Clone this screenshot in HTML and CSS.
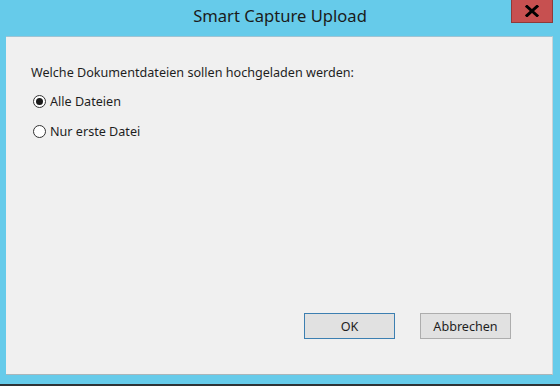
FILE: index.html
```html
<!DOCTYPE html>
<html lang="de">
<head>
    <meta charset="UTF-8">
    <title>Smart Capture Upload</title>
    <link rel="stylesheet" href="styles.css">
</head>
<body>
<div class='window'>
    <div class='titleBar'>
        <span class='title'>Smart Capture Upload</span>
        <a href="javascript:;" class='closeBtn'>
            <svg width="14" height="12" viewBox="0 0 14 12">
                <path d="M2 1.5 L12 10.5 M12 1.5 L2 10.5" stroke="#000" stroke-width="3" stroke-linecap="square"/>
            </svg>
        </a>
    </div>
    <div class='client'>
        <p class='question'>Welche Dokumentdateien sollen hochgeladen werden:</p>
        <ul class='options'>
            <li><span class='radio checked'></span>Alle Dateien</li>
            <li><span class='radio'></span>Nur erste Datei</li>
        </ul>
        <div class='buttons'>
            <button class='btn btnDefault'>OK</button>
            <button class='btn'>Abbrechen</button>
        </div>
    </div>
    <div class='bottomEdge'></div>
</div>
</body>
</html>
```

FILE: styles.css
```css
*{
    margin:0;
    padding:0;
    box-sizing:border-box;
}
ul,li{
    list-style:none;
}
body{
    background:#66cbea;
    font-family:"Noto Sans","Open Sans",sans-serif;
}
.window{
    display:flex;
    flex-direction:column;
    width:560px;
    height:386px;
    background:#66cbea;
}
.titleBar{
    position:relative;
    height:36px;
    display:flex;
    justify-content:center;
    align-items:flex-start;
}
.titleBar .title{
    margin-top:4px;
    font-size:16.6px;
    color:#1b1b1b;
}
.titleBar .closeBtn{
    position:absolute;
    top:0;
    left:511px;
    width:42px;
    height:23px;
    display:flex;
    align-items:center;
    justify-content:center;
    background:#c75050;
    border:1px solid #8e3a3a;
    border-top:none;
}
.client{
    flex:1;
    margin:0 7px 0 6px;
    background:#f0f0f0;
    border-top:1px solid #9fc4d4;
    border-right:1px solid #c7d3d8;
    border-bottom:1px solid #a9b6bb;
    display:flex;
    flex-direction:column;
    padding:27px 0 0 25px;
    font-family:"Noto Sans","Open Sans",sans-serif;
    font-size:12.6px;
    color:#1e1e1e;
}
.question{
    height:17px;
    line-height:17px;
}
.options{
    margin-top:12px;
}
.options li{
    display:flex;
    align-items:center;
    height:17px;
    line-height:17px;
    margin-bottom:13px;
}
.radio{
    width:13px;
    height:13px;
    margin:0 4px 0 2px;
    border:1px solid #333;
    border-radius:50%;
    background:#fff;
    display:flex;
    align-items:center;
    justify-content:center;
}
.radio.checked::after{
    content:"";
    width:7px;
    height:7px;
    border-radius:50%;
    background:#1a1a1a;
}
.buttons{
    margin-top:auto;
    margin-bottom:35px;
    display:flex;
    padding-left:273px;
    gap:25px;
}
.btn{
    width:91px;
    height:26px;
    background:#e1e1e1;
    border:1px solid #adadad;
    font-family:"Noto Sans","Open Sans",sans-serif;
    font-size:12.6px;
    color:#1e1e1e;
}
.btnDefault{
    border-color:#3c7fb1;
}
.bottomEdge{
    height:11px;
    border-bottom:2px solid #2f3336;
}
```
